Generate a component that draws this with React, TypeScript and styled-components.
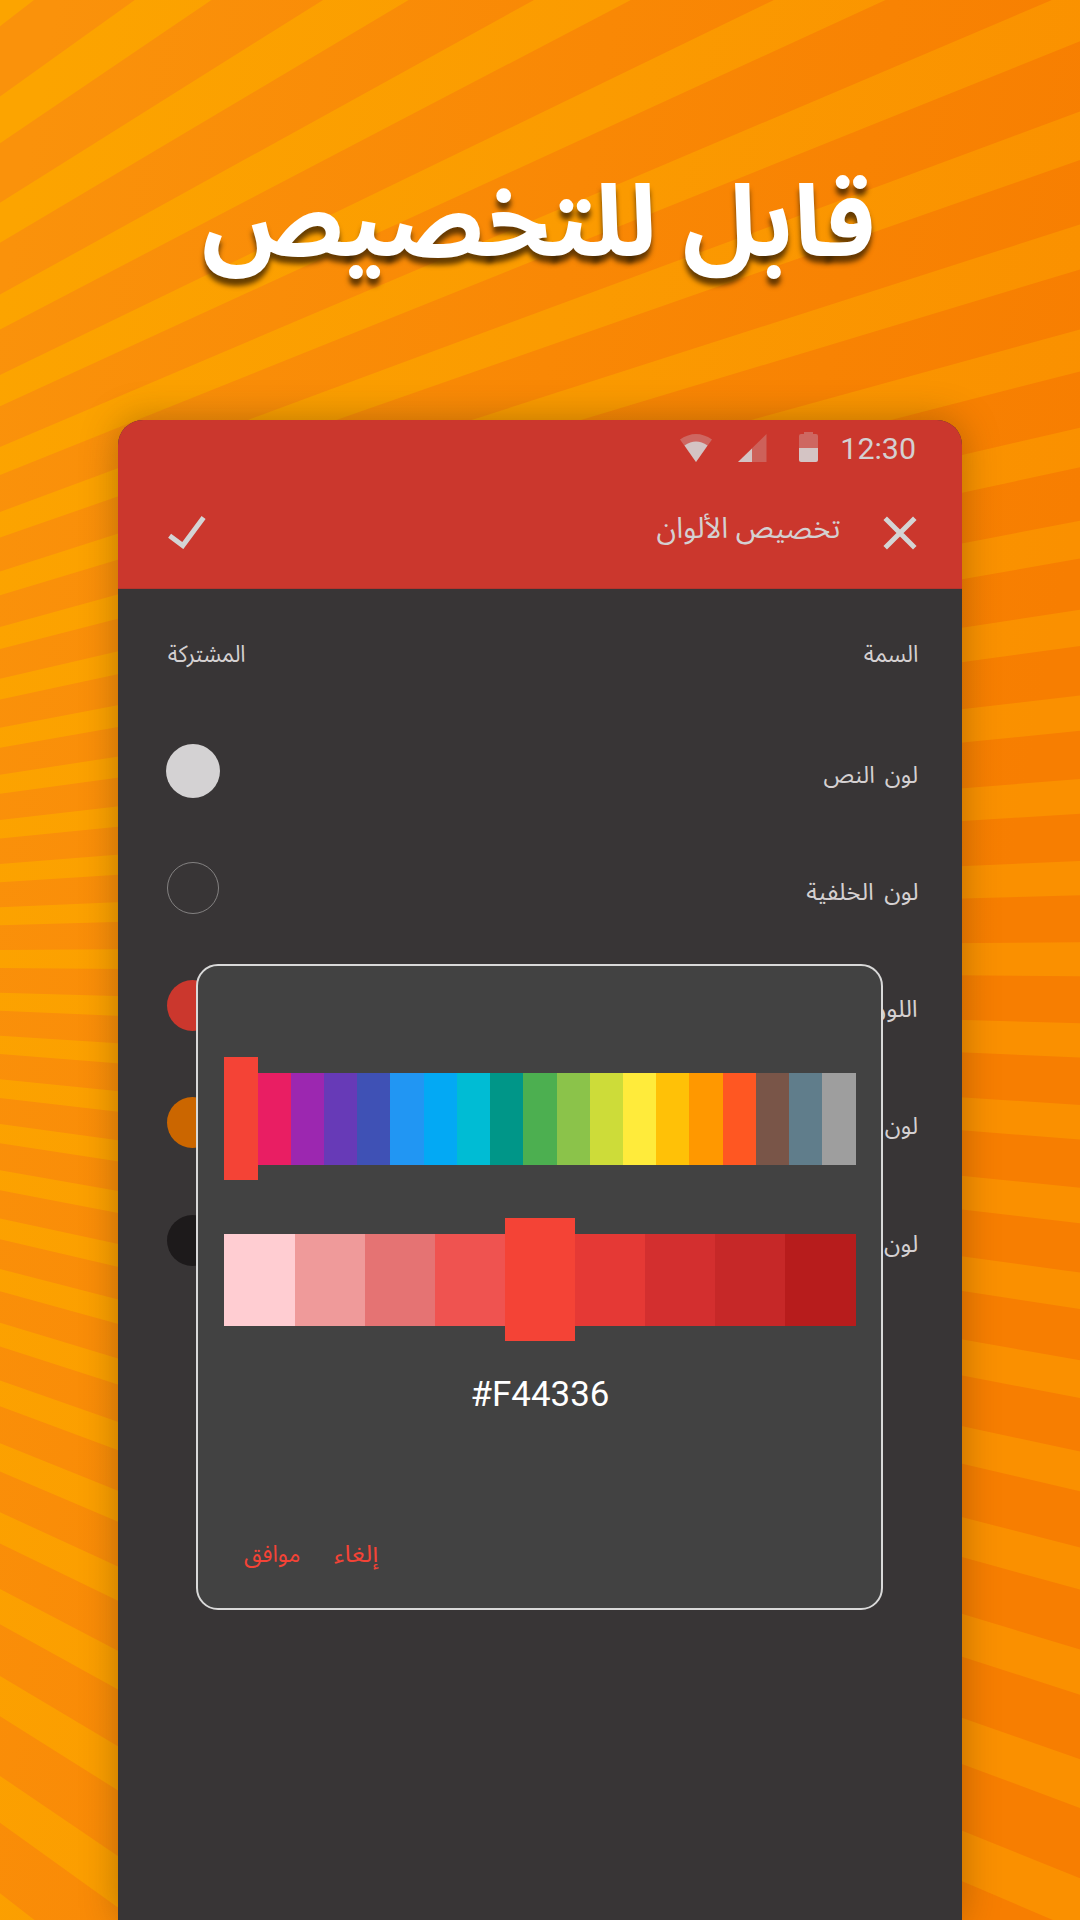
import React from 'react';
import styled, { createGlobalStyle } from 'styled-components';

const Global = createGlobalStyle`
  * { box-sizing: border-box; }
  body { margin: 0; background: #f98c08; }
`;

const arabic = `"Noto Sans Arabic", "Noto Sans Arabic UI", "Noto Sans", "DejaVu Sans", sans-serif`;

const Poster = styled.main`
  position: relative;
  width: 1080px;
  height: 1920px;
  overflow: hidden;
  display: flex;
  flex-direction: column;
  align-items: center;
  font-family: ${arabic};
`;

const Backdrop = styled.svg`
  position: absolute;
  inset: 0;
`;

const Headline = styled.h1`
  position: relative;
  margin: 0;
  height: 420px;
  padding: 145px 3px 0 0;
  flex: none;
  font-size: 99.8px;
  line-height: 160px;
  font-weight: 700;
  color: #fff;
  direction: rtl;
  white-space: nowrap;
  text-shadow: 0 7px 5px rgba(60, 35, 0, 0.78);
`;

const Phone = styled.section`
  position: relative;
  width: 844px;
  height: 1500px;
  flex: none;
  display: flex;
  flex-direction: column;
  border-radius: 25px 25px 0 0;
  background: #383536;
  box-shadow: 0 0 36px rgba(70, 50, 0, 0.36);
`;

const Header = styled.header`
  height: 169px;
  border-radius: 25px 25px 0 0;
  background: #cb372d;
  border-bottom: 1px solid #b5352d;
  color: #d4d0d1;
`;

const StatusBar = styled.div`
  height: 56px;
  padding: 0 46px 0 562px;
  display: flex;
  align-items: center;
`;

const StatusIcon = styled.svg<{ $gap: number }>`
  flex: none;
  margin-right: ${p => p.$gap}px;
`;

const Clock = styled.span`
  margin-left: auto;
  font: 400 30.4px/57px Roboto, sans-serif;
`;

const TitleBar = styled.div`
  direction: rtl;
  height: 113px;
  padding: 0 45px 0 50px;
  display: flex;
  align-items: center;
`;

const Title = styled.h2`
  margin: -8px 42.5px 0 auto;
  font-size: 29px;
  font-weight: 400;
  line-height: 50px;
`;

const List = styled.ul`
  direction: rtl;
  list-style: none;
  margin: 0;
  padding: 6.5px 44px 0 48px;
`;

const Row = styled.li`
  height: 117.2px;
  display: flex;
  align-items: center;
  justify-content: space-between;
  color: #d4d0d1;
`;

const Label = styled.span<{ $stretch?: number; $end?: boolean; $drop?: number }>`
  font-size: 23.4px;
  line-height: 40px;
  word-spacing: 4px;
  padding-top: ${p => p.$drop ?? 9}px;
  padding-left: ${p => (p.$end ? 2 : 0)}px;
  transform: scaleX(${p => p.$stretch ?? 1});
  transform-origin: ${p => (p.$end ? 'left' : 'right')} center;
`;

const Swatch = styled.span<{ $color: string; $size: number; $outline?: boolean }>`
  width: ${p => p.$size}px;
  height: ${p => p.$size}px;
  margin-left: ${p => (53 - p.$size) / 2}px;
  border-radius: 50%;
  background: ${p => p.$color};
  border: ${p => (p.$outline ? '1.5px solid #838181' : 'none')};
`;

const Dialog = styled.div`
  position: absolute;
  left: 78px;
  top: 544px;
  width: 687px;
  height: 646px;
  padding: 107px 25.5px 0 26.4px;
  display: flex;
  flex-direction: column;
  background: #424242;
  border: 2px solid #d9d9d9;
  border-radius: 22px;
`;

const Strip = styled.div`
  display: flex;
  height: 92px;
  & + & { margin-top: 69px; }
`;

const Cell = styled.span<{ $color: string; $active?: boolean }>`
  flex: 1;
  background: ${p => p.$color};
  margin: ${p => (p.$active ? '-16px 0 -15px' : '0')};
`;

const Hex = styled.div`
  margin-top: 44px;
  text-align: center;
  font: 400 34.9px/50px Roboto, sans-serif;
  color: #fff;
`;

const Actions = styled.div`
  direction: rtl;
  display: flex;
  justify-content: flex-end;
  gap: 31px;
  margin-top: 110px;
  padding-left: 20px;
`;

const Action = styled.button<{ $stretch: number }>`
  padding: 0;
  border: 0;
  background: none;
  color: #f44336;
  font: 400 23.4px/50px ${arabic};
  transform: scaleX(${p => p.$stretch});
  transform-origin: left center;
`;

const RAY_STEP = 0.0645;
const HUB = { x: -1204, y: 958.5 };

/* The burst is drawn as straight wedges whose edges all run out of HUB. */
const rayY = (n: number, x: number) =>
  HUB.y + (662 * (x - HUB.x) / 1204) * Math.tan(n * RAY_STEP);

function Sunburst() {
  const rays = [];
  for (let n = -17; n <= 17; n++) {
    const a = n - 0.2;
    const b = n + 0.22;
    rays.push(
      <polygon
        key={n}
        points={`0,${rayY(a, 0)} 1080,${rayY(a, 1080)} 1080,${rayY(b, 1080)} 0,${rayY(b, 0)}`}
        fill="url(#ray)"
      />
    );
  }
  return (
    <Backdrop width="1080" height="1920" viewBox="0 0 1080 1920">
      <defs>
        <linearGradient id="base" gradientUnits="userSpaceOnUse" x1="0" y1="300" x2="1080" y2="500">
          <stop offset="0" stopColor="#fa920b" />
          <stop offset="0.5" stopColor="#f98805" />
          <stop offset="1" stopColor="#f77e01" />
        </linearGradient>
        <linearGradient id="ray" gradientUnits="userSpaceOnUse" x1="0" y1="300" x2="1080" y2="500">
          <stop offset="0" stopColor="#fca400" />
          <stop offset="0.5" stopColor="#fb9b01" />
          <stop offset="1" stopColor="#fa9000" />
        </linearGradient>
      </defs>
      <rect width="1080" height="1920" fill="url(#base)" />
      {rays}
    </Backdrop>
  );
}

const HUES = ['#f44336', '#e91e63', '#9c27b0', '#673ab7', '#3f51b5', '#2196f3', '#03a9f4', '#00bcd4', '#009688', '#4caf50', '#8bc34a', '#cddc39', '#ffeb3b', '#ffc107', '#ff9800', '#ff5722', '#795548', '#607d8b', '#9e9e9e'];
const SHADES = ['#ffcdd2', '#ef9a9a', '#e57373', '#ef5350', '#f44336', '#e53935', '#d32f2f', '#c62828', '#b71c1c'];

export default function App() {
  return (
    <Poster>
      <Global />
      <Sunburst />
      <Headline>قابل للتخصيص</Headline>
      <Phone>
        <Header>
          <StatusBar>
            <StatusIcon $gap={26} width="32" height="30" viewBox="0 0 32 30" fill="#d4c4c4">
              <path d="M0 6.500Q16-4.500 32 6.500L16 29Z" opacity=".35" />
              <path d="M4.500 12.500Q16 4.500 27.500 12.500L16 29Z" />
            </StatusIcon>
            <StatusIcon $gap={32} width="29" height="30" viewBox="0 0 29 30" fill="#d4c4c4">
              <path d="M0 29L28.500 1V29Z" opacity=".3" />
              <path d="M0 29L14 15.500V29Z" />
            </StatusIcon>
            <StatusIcon $gap={0} width="19" height="32" viewBox="0 0 19 32" fill="#d4c4c4">
              <path d="M5 0H14V2H17Q19 2 19 4V16H0V4Q0 2 2 2H5Z" opacity=".35" />
              <path d="M0 16H19V28Q19 30 17 30H2Q0 30 0 28Z" />
            </StatusIcon>
            <Clock>12:30</Clock>
          </StatusBar>
          <TitleBar>
            <svg width="34" height="34" viewBox="0 0 34 34" stroke="#d4d4d4" strokeWidth="5" fill="none">
              <path d="M2.200 2.200L31.800 31.800M31.800 2.200L2.200 31.800" />
            </svg>
            <Title>تخصيص الألوان</Title>
            <svg width="38" height="33" viewBox="0 0 38 33" stroke="#d4d4d4" strokeWidth="5" fill="none">
              <path d="M1.600 19.800L14.800 29.600L35.600 1.600" />
            </svg>
          </TitleBar>
        </Header>
        <List>
          <Row>
            <Label $drop={2} $stretch={0.97}>السمة</Label>
            <Label $drop={2} $stretch={0.935} $end>المشتركة</Label>
          </Row>
          <Row><Label>لون النص</Label><Swatch $color="#d4d2d3" $size={54} /></Row>
          <Row><Label $stretch={1.035}>لون الخلفية</Label><Swatch $color="transparent" $size={52} $outline /></Row>
          <Row><Label $stretch={1.06}>اللون</Label><Swatch $color="#cb372d" $size={51} /></Row>
          <Row><Label>لون</Label><Swatch $color="#cb6600" $size={51} /></Row>
          <Row><Label $stretch={1.03}>لون</Label><Swatch $color="#1d1a1b" $size={51} /></Row>
        </List>
        <Dialog>
          <Strip>{HUES.map((c, i) => <Cell key={c} $color={c} $active={i === 0} />)}</Strip>
          <Strip>{SHADES.map((c, i) => <Cell key={c} $color={c} $active={i === 4} />)}</Strip>
          <Hex>#F44336</Hex>
          <Actions>
            <Action $stretch={1.1}>إلغاء</Action>
            <Action $stretch={0.97}>موافق</Action>
          </Actions>
        </Dialog>
      </Phone>
    </Poster>
  );
}
